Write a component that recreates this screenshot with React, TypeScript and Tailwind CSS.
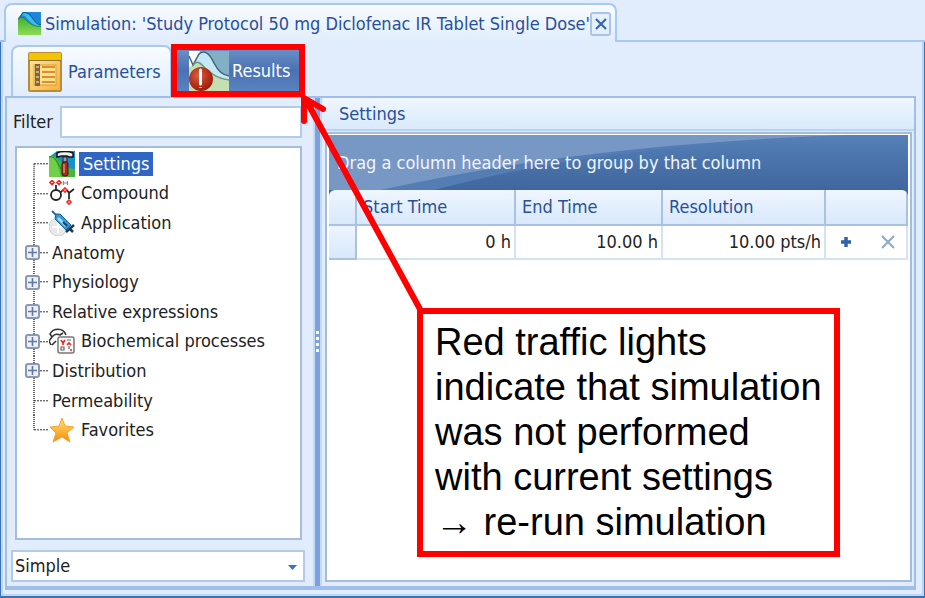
import React from "react";

type NodeKind = "settings" | "compound" | "application" | "processes" | "favorites";

type TreeNode = {
  label: string;
  icon?: NodeKind;
  expandable?: boolean;
  selected?: boolean;
};

const nodes: TreeNode[] = [
  { label: "Settings", icon: "settings", selected: true },
  { label: "Compound", icon: "compound" },
  { label: "Application", icon: "application" },
  { label: "Anatomy", expandable: true },
  { label: "Physiology", expandable: true },
  { label: "Relative expressions", expandable: true },
  { label: "Biochemical processes", icon: "processes", expandable: true },
  { label: "Distribution", expandable: true },
  { label: "Permeability" },
  { label: "Favorites", icon: "favorites" },
];

function SimulationIcon() {
  return (
    <svg width="27" height="27" viewBox="0 0 27 27" aria-hidden="true">
      <defs>
        <linearGradient id="simGreen" x1="0" y1="0" x2="0" y2="1">
          <stop offset="0" stopColor="#3fae3c" />
          <stop offset="1" stopColor="#8ddc50" />
        </linearGradient>
      </defs>
      <rect width="27" height="27" fill="#1d86dc" />
      <path d="M0 0H5L0 9Z" fill="#fff" />
      <path d="M5 1C10 0 14 4 18 9C21 13 24 15 27 15V18C20 17 15 13 11 8C9 5 7 3 5 4Z" fill="#35bff0" />
      <path d="M0 9C3 5 5 6 9 9C14 14 19 17 27 17V27H0Z" fill="url(#simGreen)" />
      <path d="M0 8L6 1C13 -1 16 6 19 10C21 13 24 15 27 15" fill="none" stroke="#164f62" />
      <path d="M0 9C3 4 6 6 10 10C15 15 20 17 27 17" fill="none" stroke="#247a48" />
    </svg>
  );
}

function ParametersIcon() {
  return (
    <svg width="34" height="40" viewBox="0 0 34 40" aria-hidden="true">
      <defs>
        <linearGradient id="paramBody" x1="0" y1="0" x2="1" y2="1">
          <stop offset="0" stopColor="#ffe9a0" />
          <stop offset="1" stopColor="#f4b03c" />
        </linearGradient>
      </defs>
      <rect x="1" y="1" width="32" height="38" rx="1" fill="url(#paramBody)" stroke="#b78b38" strokeWidth="2" />
      <rect x="1" y="1" width="32" height="7" fill="#f5c400" />
      <path d="M1 8.500H33" stroke="#8c7435" />
      <rect x="6" y="13" width="22" height="20" fill="#ffdf88" stroke="#d99c35" />
      <path d="M9.500 12V34" stroke="#8b642d" strokeWidth="5" />
      <path d="M8 15H11M8 20H11M8 25H11M8 30H11" stroke="#b9b09a" strokeWidth="2" />
      <path d="M14 15H27M14 20H27M14 25H27M14 30H27" stroke="#d78f31" strokeWidth="2" />
    </svg>
  );
}

function ResultsIcon() {
  return (
    <svg width="40" height="40" viewBox="0 0 40 40" aria-hidden="true">
      <defs>
        <radialGradient id="alertRed" cx=".4" cy=".35" r=".7">
          <stop offset="0" stopColor="#d86247" />
          <stop offset=".5" stopColor="#b93920" />
          <stop offset="1" stopColor="#a01409" />
        </radialGradient>
      </defs>
      <rect width="40" height="40" fill="#82afc5" />
      <path d="M0 0H11L4 14L0 17Z" fill="#fff" />
      <path d="M4 14L10 2C18 -3 23 8 26 14C30 22 34 24 40 25V30C30 28 20 22 14 16C9 11 7 11 4 14Z" fill="#c5e7f6" />
      <path d="M0 18C6 9 10 11 16 17C23 24 30 28 40 29V40H0Z" fill="#c4dfb2" />
      <path d="M0 5L4 14L10 3C17 -3 22 6 25 12C29 20 33 24 40 25" fill="none" stroke="#3d6877" strokeWidth="1.500" />
      <path d="M4 14C9 8 12 13 16 17C23 24 30 28 40 29" fill="none" stroke="#6c9381" strokeWidth="1.500" />
      <circle cx="12" cy="28" r="12" fill="url(#alertRed)" />
      <path d="M11.500 19V33" stroke="#fff" strokeWidth="3" strokeLinecap="round" />
      <path d="M11.500 36V37" stroke="#e7a191" strokeWidth="3" />
    </svg>
  );
}

function NodeIcon({ kind }: { kind: NodeKind }) {
  const ring = { fill: "none", stroke: "#f22", strokeWidth: 1.6 };
  return (
    <svg className="shrink-0" width="26" height="26" viewBox="0 0 26 26" aria-hidden="true">
      {kind === "settings" && (
        <>
          <rect width="26" height="26" fill="#1692cf" />
          <path d="M0 0H8L0 6Z" fill="#fff" />
          <path d="M0 6C5 2 9 8 13 12C18 16 22 18 26 18V26H0Z" fill="#45b83c" />
          <path d="M0 6C6 4 8 12 12 26H0Z" fill="#73cf4a" />
          <path d="M0 6C6 4 9 13 12 18" fill="none" stroke="#238437" />
          <path d="M8 2C12 0 20 0 24 2V6H20L18 5H13L8 6Z" fill="#eef0ee" stroke="#151515" strokeWidth="1.500" />
          <rect x="14" y="6" width="4" height="5" fill="#9a9f9d" stroke="#222" />
          <rect x="13" y="11" width="6" height="14" rx="2" fill="#9a3021" stroke="#4d130c" />
          <path d="M15 13V22" stroke="#e68d75" strokeWidth="1.500" />
        </>
      )}
      {kind === "compound" && (
        <>
          <path d="M7 5V10M11 13L14 10M18 10L20 13L25 9M20 13V19" fill="none" stroke="#222" strokeWidth="1.700" />
          <circle cx="7" cy="15" r="5" fill="#fff" stroke="#222" strokeWidth="1.800" />
          <path d="M3 .500L5 2.500L3 4.500L1 2.500ZM10 .500L12 2.500L10 4.500L8 2.500ZM16 8L18 10L16 12L14 10ZM20 20L22 22L20 24L18 22Z" {...ring} />
          <path d="M14.500 1V5M18.500 1V5M14.500 3H18.500" stroke="#8a8a8a" strokeWidth="1.200" fill="none" />
        </>
      )}
      {kind === "application" && (
        <>
          <circle cx="9" cy="17" r="9" fill="#e9e9ea" stroke="#cfcfd1" />
          <path d="M9 11V23M3 17H15" stroke="#fff" strokeWidth="2" />
          <path d="M3 1L8 6" stroke="#25688d" strokeWidth="1.800" />
          <path d="M7 4L11 4L22 15L17 20L6 9Z" fill="#3598d6" stroke="#17659a" />
          <path d="M9 8L17 16" stroke="#a9dcf5" strokeWidth="2.500" />
          <path d="M14 12L18 16" stroke="#0e3d63" strokeWidth="2" />
          <path d="M17 22L25 15M20 18L24 22" stroke="#173a58" strokeWidth="2.500" />
        </>
      )}
      {kind === "processes" && (
        <>
          <path d="M2 17L0 13L3 9L1 6C4 0 14 -1 17 7M3 9C7 4 9 7 11 7L14 5M3 17L7 13" fill="none" stroke="#333" strokeWidth="1.600" />
          <rect x="9" y="9" width="16" height="16" rx="2" fill="#fafafa" stroke="#777" strokeWidth="1.500" />
          <path d="M12 12L14 15L16 12M14 15V17M18 17L20 15L22 17M21 22H23" fill="none" stroke="#ef2020" strokeWidth="1.600" />
          <path d="M12 19H15V22H12ZM20 18V21M18 12H22" fill="none" stroke="#666" strokeWidth="1.200" />
        </>
      )}
      {kind === "favorites" && (
        <>
          <defs>
            <linearGradient id="starGold" x1="0" y1="0" x2="0" y2="1">
              <stop offset="0" stopColor="#ffe08a" />
              <stop offset=".5" stopColor="#fdb93a" />
              <stop offset="1" stopColor="#f08a10" />
            </linearGradient>
          </defs>
          <path
            d="M13 1L16 9L25 10L18 16L21 25L13 20L4 25L7 16L1 10L10 9Z"
            fill="url(#starGold)"
            stroke="#f5a52f"
            strokeLinejoin="round"
          />
        </>
      )}
    </svg>
  );
}

function TreeRow({ node, first, last }: { node: TreeNode; first: boolean; last: boolean }) {
  return (
    <li role="treeitem" aria-selected={!!node.selected} className="flex items-center">
      <div className="relative flex h-full w-6 shrink-0 items-center">
        <svg className="h-full w-full" aria-hidden="true">
          <line x1="9" x2="9" y1={first ? "50%" : "0"} y2={last ? "50%" : "100%"} stroke="#333" strokeDasharray="1 1" strokeWidth="2" opacity=".75" />
          <line x1="9" x2="24" y1="50%" y2="50%" stroke="#333" strokeDasharray="2 1" strokeWidth="1" />
        </svg>
        {node.expandable && (
          <button
            type="button"
            aria-label={`Expand ${node.label}`}
            className="absolute left-0 flex size-[15px] items-center justify-center rounded-[3px] border-2 border-[#8a98b4] bg-[#eaf0f9]"
          >
            <svg width="9" height="9" viewBox="0 0 9 9" aria-hidden="true">
              <path d="M4.500 0V9M0 4.500H9" stroke="#6577a0" strokeWidth="1.600" />
            </svg>
          </button>
        )}
      </div>
      {node.icon && <NodeIcon kind={node.icon} />}
      <span
        className={
          node.selected
            ? "ml-1 bg-[#2f66c4] px-1 leading-6 text-white"
            : node.icon
              ? "ml-1 px-[2px] leading-6"
              : "px-[3px] leading-6"
        }
      >
        {node.label}
      </span>
    </li>
  );
}

function SidePanel() {
  return (
    <section className="flex w-[306px] shrink-0 flex-col pt-2 pr-2 pb-1 pl-1">
      <div className="flex items-center">
        <label htmlFor="filter" className="w-[49px] shrink-0 pl-[2px]">
          Filter
        </label>
        <input id="filter" type="text" className="mr-[3px] h-8 min-w-0 flex-1 border-2 border-[#b3cbe9] bg-white px-2 outline-none" />
      </div>
      <div className="mt-2 mr-[3px] ml-1 flex-1 border-2 border-[#a3bcdf] bg-white pt-px pl-2">
        <ul role="tree" aria-label="Simulation parameters" className="grid h-[296px] auto-rows-fr">
          {nodes.map((n, i) => (
            <TreeRow key={n.label} node={n} first={i === 0} last={i === nodes.length - 1} />
          ))}
        </ul>
      </div>
      <div className="relative mt-[10px]">
        <select aria-label="View mode" className="block h-8 w-full appearance-none border-2 border-[#b3cbe9] bg-white px-[2px] outline-none">
          <option>Simple</option>
        </select>
        <svg className="pointer-events-none absolute top-3 right-2" width="9" height="9" viewBox="0 0 9 9" aria-hidden="true">
          <path d="M0 3H9L4.500 8Z" fill="#3a72bd" />
        </svg>
      </div>
    </section>
  );
}

function Splitter() {
  return (
    <div className="flex w-[9px] shrink-0 flex-col items-center justify-center border-x-2 border-[#c3daf7] bg-[#7ba2dc]">
      <svg width="5" height="24" viewBox="0 0 5 24" aria-hidden="true">
        <path d="M2.500 1V24" stroke="#fff" strokeWidth="3" strokeDasharray="3 3" />
      </svg>
    </div>
  );
}

function SettingsPanel() {
  const head = "h-9 border-r-2 border-b-2 border-[#a9c2e4] bg-linear-to-b from-[#eff6ff] to-[#d8e8fb] px-[6px] text-left font-normal text-[#28509a]";
  const cell = "h-[34px] border-r-2 border-b-2 border-[#d3e3f6] bg-white px-[3px] text-right";
  return (
    <section className="flex min-w-0 flex-1 flex-col pl-px">
      <h2 className="h-[33px] border-b-2 border-[#b7d4f7] bg-linear-to-b from-[#f0f7ff] to-[#d9e9fc] pl-4 leading-8 text-[#28509a]">Settings</h2>
      <div className="mx-[2px] mt-px mb-1 flex flex-1 flex-col border-2 border-[#a5bcdc] bg-white px-[2px] pt-px">
        <div className="relative flex h-[55px] shrink-0 items-center overflow-hidden bg-linear-to-b from-[#5580b8] to-[#3f669d] pl-2 text-[#f1f5fc]">
          <svg className="absolute inset-0 size-full" viewBox="0 0 578 55" preserveAspectRatio="none" aria-hidden="true">
            <path d="M0 0H520C350 8 220 24 105 55H0Z" fill="#547db4" />
            <path d="M0 0H520C340 6 190 24 52 55H0Z" fill="#7797c4" />
          </svg>
          <p className="relative">Drag a column header here to group by that column</p>
        </div>
        <div className="bg-[#3f669d]">
          <table className="w-full table-fixed border-separate border-spacing-0 overflow-hidden rounded-t-md">
            <colgroup>
              <col className="w-[28px]" />
              <col className="w-[159px]" />
              <col className="w-[147px]" />
              <col />
              <col className="w-[82px]" />
            </colgroup>
            <thead>
              <tr>
                <th className={head} aria-label="Row" />
                <th className={head}>Start Time</th>
                <th className={head}>End Time</th>
                <th className={head}>Resolution</th>
                <th className={head} aria-label="Actions" />
              </tr>
            </thead>
            <tbody>
              <tr>
                <td className="h-[34px] border-r-2 border-b-2 border-[#a9c2e4] bg-linear-to-b from-[#edf5ff] to-[#d8e8fb]" />
                <td className={cell}>0 h</td>
                <td className={cell}>10.00 h</td>
                <td className={cell}>10.00 pts/h</td>
                <td className={cell}>
                  <div className="flex items-center justify-between pr-2 pl-[11px]">
                    <button type="button" aria-label="Add interval">
                      <svg width="12" height="12" viewBox="0 0 12 12" aria-hidden="true">
                        <path d="M6 1V11M1 6H11" stroke="#2f62ae" strokeWidth="3.500" />
                      </svg>
                    </button>
                    <button type="button" aria-label="Remove interval">
                      <svg width="14" height="14" viewBox="0 0 14 14" aria-hidden="true">
                        <path d="M1 1L13 13M13 1L1 13" stroke="#8ba8c8" strokeWidth="2" />
                      </svg>
                    </button>
                  </div>
                </td>
              </tr>
            </tbody>
          </table>
        </div>
      </div>
    </section>
  );
}

function Annotation() {
  return (
    <>
      <svg className="pointer-events-none absolute top-0 left-0" width="450" height="320" viewBox="0 0 450 320" aria-hidden="true">
        <path d="M421 311L306 100M304 121V98L323 109" fill="none" stroke="#f00" strokeWidth="6" strokeLinecap="round" strokeLinejoin="round" />
      </svg>
      <p className="absolute top-[308px] left-[417px] border-6 border-[#f00] bg-white px-3 py-[6px] font-['Liberation_Sans',Arial,sans-serif] text-[38px] leading-[45px] whitespace-nowrap text-black">
        Red traffic lights
        <br />
        indicate that simulation
        <br />
        was not performed
        <br />
        with current settings
        <br />→ re-run simulation
      </p>
    </>
  );
}

export default function App() {
  return (
    <main className="relative flex min-h-screen flex-col bg-[#e1edfd] font-['DejaVu_Sans_Condensed','Noto_Sans',sans-serif] text-[18px] leading-6 text-[#222]">
      <header className="flex h-[42px] items-end">
        <div className="h-[42px] w-1 shrink-0 border-b-2 border-[#9fbfea]" />
        <div className="flex h-[39px] w-[613px] items-center rounded-t-lg border-2 border-b-0 border-[#a8c9f2] bg-linear-to-b from-[#f8fbff] to-[#e1edfd] pl-3">
          <SimulationIcon />
          <h1 className="ml-1 whitespace-nowrap text-[#28509a]">Simulation: 'Study Protocol 50 mg Diclofenac IR Tablet Single Dose'</h1>
          <button type="button" aria-label="Close" className="mr-1 ml-auto flex size-6 items-center justify-center rounded-[3px] border-2 border-[#a9c4e8] bg-[#e6f0fd]">
            <svg width="12" height="12" viewBox="0 0 12 12" aria-hidden="true">
              <path d="M1 1L11 11M11 1L1 11" stroke="#3866a8" strokeWidth="2.200" />
            </svg>
          </button>
        </div>
        <div className="h-px flex-1 self-end border-b-2 border-[#a8c9f2]" />
      </header>

      <div className="flex flex-1 flex-col border-x border-b-2 border-[#3b73b5]">
        <div className="flex flex-1 flex-col border-x-2 border-b-2 border-[#bcd6f6] pt-[3px] pr-[6px] pb-1 pl-[2px]">
          <div role="tablist" className="flex h-[51px] pl-[6px]">
            <button type="button" role="tab" aria-selected="true" className="flex w-[161px] items-center rounded-t-lg border-2 border-b-0 border-[#a8c9f2] bg-linear-to-b from-[#f8fbff] to-[#e1edfd] pl-[15px] text-[#28509a]">
              <ParametersIcon />
              <span className="ml-[6px]">Parameters</span>
            </button>
            <button type="button" role="tab" aria-selected="false" className="relative flex w-[132px] items-center bg-linear-to-b from-[#7194cb] via-[#4a72b2] to-[#5d86c4] pl-[17px] text-white">
              <ResultsIcon />
              <span className="ml-[3px]">Results</span>
              <span className="absolute -inset-px border-6 border-[#f00]" />
            </button>
          </div>
          <div className="flex flex-1 border-2 border-b-4 border-[#9fbfea]">
            <SidePanel />
            <Splitter />
            <SettingsPanel />
          </div>
        </div>
      </div>
      <Annotation />
    </main>
  );
}
